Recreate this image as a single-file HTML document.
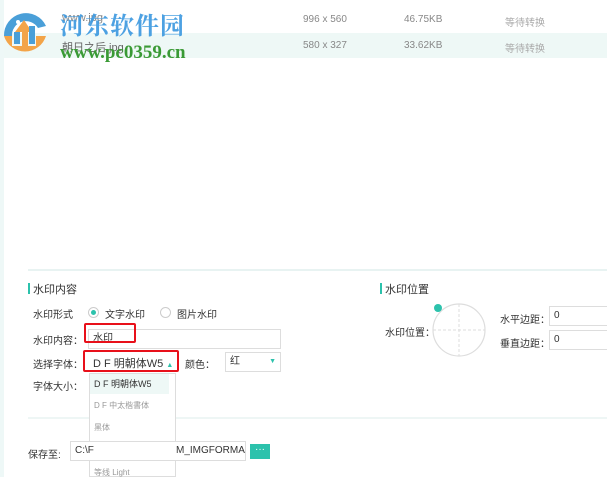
<!DOCTYPE html>
<html><head><meta charset="utf-8"><style>
*{margin:0;padding:0;box-sizing:border-box}
body{width:607px;height:477px;overflow:hidden;background:#fff;position:relative;font-family:"Liberation Sans","Noto Sans CJK SC",sans-serif;font-size:10px;color:#333}
.a{position:absolute;white-space:nowrap}
.g{color:#888}
.inp{position:absolute;border:1px solid #ddd;background:#fff;padding-left:4px;font-size:10px;line-height:18px}
.red{position:absolute;border:2px solid #e8101a;border-radius:2px}
</style></head><body>
<div class="a" style="left:0;top:0;width:4px;height:477px;background:#eef8f7"></div>
<div class="a" style="left:4px;top:33px;width:603px;height:25px;background:#eef8f6"></div>
<div class="a" style="left:28px;top:269px;width:579px;height:2px;background:#e8f3f2"></div>
<div class="a" style="left:28px;top:417px;width:579px;height:2px;background:#eef6f5"></div>
<!-- logo -->
<svg class="a" style="left:2px;top:6px" width="46" height="56" viewBox="0 0 46 56">
<path d="M2 30 A22 22 0 0 1 44 20 L36 22 A14 14 0 0 0 10 30 Z" fill="#4a9fd8"/>
<path d="M2 30 L10 30 L10 40 L20 40 L20 26 L13 26 L22 14 L30 26 L26 26 L26 40 L34 40 L34 30 L44 30 A22 22 0 0 1 2 30Z" fill="#f3a448"/>
<rect x="12" y="26" width="6" height="12" fill="#4a9fd8"/><rect x="27" y="20" width="6" height="18" fill="#4a9fd8"/>
<circle cx="16" cy="16" r="2" fill="#fff"/>
</svg>
<div class="a" style="left:62px;top:12px;color:#888;font-size:11px">www.jpg</div>
<div class="a" style="left:62px;top:39px;color:#666;font-size:11px">朝日之后.jpg</div>
<div class="a" style="left:60px;top:6px;font-size:24px;font-weight:bold;color:#3e9ae0;font-family:'Noto Serif CJK SC',serif;letter-spacing:1px;opacity:.92">河东软件园</div>
<div class="a" style="left:60px;top:42px;font-size:19px;font-weight:bold;color:#3a9a35;font-family:'Liberation Serif',serif">www.pc0359.cn</div>
<div class="a g" style="left:303px;top:14px">996 x 560</div>
<div class="a g" style="left:303px;top:40px">580 x 327</div>
<div class="a g" style="left:404px;top:14px">46.75KB</div>
<div class="a g" style="left:404px;top:40px">33.62KB</div>
<div class="a" style="left:505px;top:14px;color:#aaa">等待转换</div>
<div class="a" style="left:505px;top:40px;color:#aaa">等待转换</div>
<!-- left panel -->
<div class="a" style="left:28px;top:283px;width:2px;height:11px;background:#2cc2ac"></div>
<div class="a" style="left:33px;top:281px;font-size:11px">水印内容</div>
<div class="a" style="left:33px;top:306px">水印形式</div>
<div class="a" style="left:88px;top:307px;width:11px;height:11px;border:1px solid #ccc;border-radius:50%"><div style="position:absolute;left:2px;top:2px;width:5px;height:5px;border-radius:50%;background:#2cc2ac"></div></div>
<div class="a" style="left:105px;top:306px">文字水印</div>
<div class="a" style="left:160px;top:307px;width:11px;height:11px;border:1px solid #ccc;border-radius:50%"></div>
<div class="a" style="left:177px;top:306px">图片水印</div>
<div class="a" style="left:33px;top:332px">水印内容：</div>
<div class="inp" style="left:88px;top:329px;width:193px;height:20px">水印</div>
<div class="red" style="left:84px;top:323px;width:52px;height:20px"></div>
<div class="a" style="left:33px;top:356px">选择字体：</div>
<div class="a" style="left:93px;top:355px;font-size:11px">D F 明朝体W5 <span style="color:#2cc2ac;font-size:7px">▲</span></div>
<div class="red" style="left:83px;top:350px;width:96px;height:22px"></div>
<div class="a" style="left:185px;top:356px">颜色：</div>
<div class="inp" style="left:225px;top:352px;width:56px;height:20px">红<span style="position:absolute;right:4px;color:#2cc2ac;font-size:7px">▼</span></div>
<div class="a" style="left:33px;top:378px">字体大小：</div>
<div class="a" style="left:89px;top:373px;width:87px;height:104px;background:#fff;border:1px solid #ddd"></div>
<div class="a" style="left:90px;top:374px;width:79px;height:20px;background:#eef8f6"></div>
<div class="a" style="left:94px;top:377px;font-size:9px;color:#333">D F 明朝体W5</div>
<div class="a" style="left:94px;top:400px;font-size:8px;color:#999">D F 中太楷書体</div>
<div class="a" style="left:94px;top:422px;font-size:8px;color:#999">黑体</div>
<div class="a" style="left:94px;top:446px;font-size:8px;color:#999">等线</div>
<div class="a" style="left:94px;top:467px;font-size:8px;color:#999">等线 Light</div>
<div class="a" style="left:28px;top:446px">保存至:</div>
<div class="inp" style="left:70px;top:441px;width:176px;height:20px">C:\F<span style="position:absolute;left:105px">M_IMGFORMA</span></div>
<div class="a" style="left:250px;top:444px;width:20px;height:15px;background:#2cc2ac;color:#fff;text-align:center;line-height:11px;font-size:10px">···</div>
<!-- right panel -->
<div class="a" style="left:380px;top:283px;width:2px;height:11px;background:#2cc2ac"></div>
<div class="a" style="left:385px;top:281px;font-size:11px">水印位置</div>
<div class="a" style="left:385px;top:324px">水印位置：</div>
<svg class="a" style="left:430px;top:300px" width="60" height="60"><circle cx="29" cy="30" r="26" fill="none" stroke="#ddd" stroke-width="1.2"/><line x1="29" y1="4" x2="29" y2="56" stroke="#ddd" stroke-dasharray="3 2"/><line x1="3" y1="30" x2="55" y2="30" stroke="#ddd" stroke-dasharray="3 2"/><circle cx="8" cy="8" r="4" fill="#2cc2ac"/></svg>
<div class="a" style="left:500px;top:311px">水平边距：</div>
<div class="inp" style="left:549px;top:306px;width:70px;height:20px">0</div>
<div class="a" style="left:500px;top:335px">垂直边距：</div>
<div class="inp" style="left:549px;top:330px;width:70px;height:20px">0</div>
</body></html>
